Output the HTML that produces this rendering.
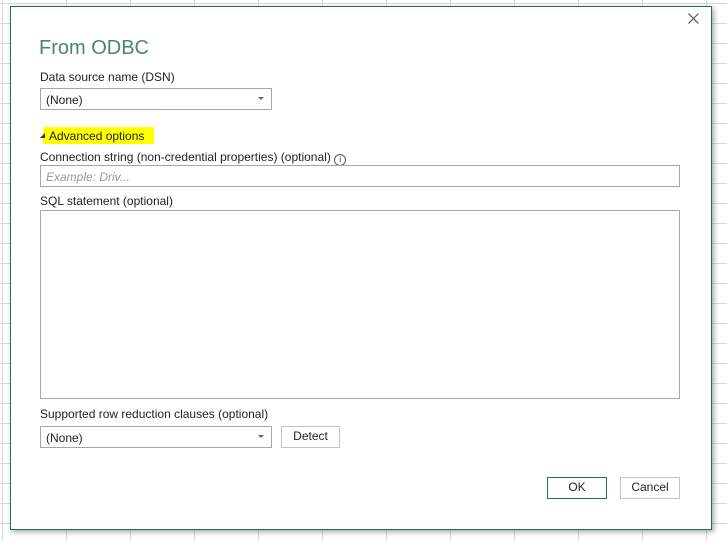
<!DOCTYPE html><html><head><style>
body{margin:0;width:727px;height:541px;overflow:hidden;font-family:"Liberation Sans",sans-serif;font-size:12px;color:#222;
background:#fff;background-image:linear-gradient(90deg,#d9d9d9 1px,transparent 1px),linear-gradient(#d9d9d9 1px,transparent 1px);background-size:64px 20px,64px 20px;background-position:2px 0,0 3px;position:relative}
.dlg{position:absolute;left:10px;top:6px;width:700px;height:522px;border:1px solid #217346;background:#fff;box-shadow:2px 2px 5px rgba(0,0,0,.35)}
.a{position:absolute}
.box{position:absolute;border:1px solid #a6a6a6;box-sizing:border-box;background:#fff}
.lbl{position:absolute;font-size:12px;white-space:nowrap}
.arr{position:absolute;right:7px;top:8px;width:0;height:0;border-left:3px solid transparent;border-right:3px solid transparent;border-top:3px solid #666}
.btn{position:absolute;border:1px solid #c4c4c4;box-sizing:border-box;text-align:center;font-size:12px;line-height:19px;background:#fff}
</style></head><body>
<div class="dlg"></div>
<svg class="a" style="left:688px;top:13px" width="11" height="11"><path d="M0.5 0.5L10.5 10.5M10.5 0.5L0.5 10.5" stroke="#555" stroke-width="1.2"/></svg>
<div class="lbl" style="left:39px;top:37px;font-size:20px;color:#4a8474">From ODBC</div>
<div class="lbl" style="left:40px;top:70px">Data source name (DSN)</div>
<div class="box" style="left:40px;top:88px;width:232px;height:22px"><span class="lbl" style="left:5px;top:4px">(None)</span><div class="arr"></div></div>
<div class="a" style="left:43px;top:127px;width:111px;height:17px;background:#ffff00"></div>
<div class="a" style="left:40px;top:133px;width:0;height:0;border-left:5px solid transparent;border-bottom:5px solid #333"></div>
<div class="lbl" style="left:49px;top:129px">Advanced options</div>
<div class="lbl" style="left:40px;top:150px">Connection string (non-credential properties) (optional) <span style="display:inline-block;width:10px;height:10px;border:1px solid #555;border-radius:50%;font-size:8px;line-height:10px;text-align:center;vertical-align:-1px">i</span></div>
<div class="box" style="left:40px;top:165px;width:640px;height:22px"><span class="lbl" style="left:5px;top:4px;font-style:italic;color:#999">Example: Driv...</span></div>
<div class="lbl" style="left:40px;top:194px">SQL statement (optional)</div>
<div class="box" style="left:40px;top:210px;width:640px;height:189px"></div>
<div class="lbl" style="left:40px;top:407px">Supported row reduction clauses (optional)</div>
<div class="box" style="left:40px;top:426px;width:232px;height:22px"><span class="lbl" style="left:5px;top:4px">(None)</span><div class="arr"></div></div>
<div class="btn" style="left:281px;top:426px;width:59px;height:22px">Detect</div>
<div class="btn" style="left:547px;top:477px;width:60px;height:22px;border-color:#217346">OK</div>
<div class="btn" style="left:620px;top:477px;width:60px;height:22px">Cancel</div>
</body></html>
